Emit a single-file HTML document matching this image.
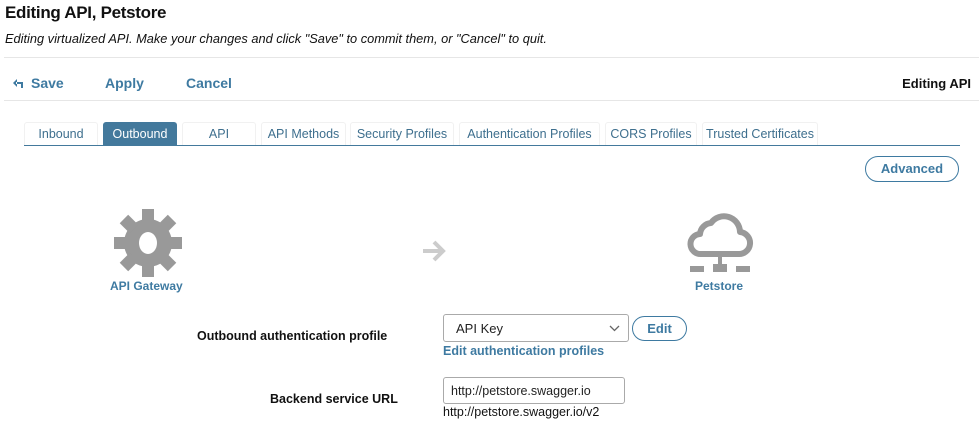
<!DOCTYPE html>
<html><head><meta charset="utf-8"><style>
*{margin:0;padding:0;box-sizing:border-box}
body{width:979px;height:439px;background:#fff;font-family:"Liberation Sans",sans-serif;color:#222;position:relative;overflow:hidden}
.a{position:absolute;white-space:nowrap}
.blue{color:#3e7aa1;font-weight:bold}
.tab{position:absolute;top:122px;height:23px;font-size:12.5px;color:#3e6f8e;text-align:center;line-height:22px;border:1px solid #f1f1f1;border-bottom:none;border-radius:3px 3px 0 0}
.tab.on{background:#43799c;color:#fff;border-color:#43799c}
</style></head><body>
<div class="a" style="left:5px;top:3px;font-size:17px;font-weight:bold;color:#111;letter-spacing:-0.3px">Editing API, Petstore</div>
<div class="a" style="left:5px;top:31px;font-size:12.8px;font-style:italic;color:#111">Editing virtualized API. Make your changes and click "Save" to commit them, or "Cancel" to quit.</div>
<div class="a" style="left:4px;top:57px;width:975px;height:1px;background:#e6e6e6"></div>
<svg class="a" style="left:12px;top:78px" width="14" height="11" viewBox="0 0 14 11"><path d="M5 1 L1 5 L5 9 Z M4 4 H11 V10 H9 V6 H4 Z" fill="#3e7aa1"/></svg>
<div class="a blue" style="left:31px;top:75px;font-size:14px">Save</div>
<div class="a blue" style="left:105px;top:75px;font-size:14px">Apply</div>
<div class="a blue" style="left:186px;top:75px;font-size:14px">Cancel</div>
<div class="a" style="right:8px;top:76px;font-size:13px;font-weight:bold;color:#111">Editing API</div>
<div class="a" style="left:4px;top:100px;width:975px;height:1px;background:#e6e6e6"></div>
<div class="tab" style="left:24px;width:74px">Inbound</div>
<div class="tab on" style="left:103px;width:74px">Outbound</div>
<div class="tab" style="left:182px;width:74px">API</div>
<div class="tab" style="left:261px;width:85px">API Methods</div>
<div class="tab" style="left:350px;width:104px">Security Profiles</div>
<div class="tab" style="left:459px;width:141px">Authentication Profiles</div>
<div class="tab" style="left:605px;width:92px">CORS Profiles</div>
<div class="tab" style="left:702px;width:116px">Trusted Certificates</div>
<div class="a" style="left:24px;top:145px;width:936px;height:1px;background:#43799c"></div>
<div class="a blue" style="left:865px;top:156px;width:94px;height:26px;border:1px solid #3e7aa1;border-radius:13px;font-size:13px;text-align:center;line-height:24px">Advanced</div>
<svg class="a" style="left:114px;top:209px" width="68" height="68" viewBox="-34 -34 68 68">
<g fill="#999"><circle r="24"/>
<g id="t"><rect x="-6" y="-34" width="12" height="14"/></g>
<use href="#t" transform="rotate(45)"/><use href="#t" transform="rotate(90)"/><use href="#t" transform="rotate(135)"/><use href="#t" transform="rotate(180)"/><use href="#t" transform="rotate(225)"/><use href="#t" transform="rotate(270)"/><use href="#t" transform="rotate(315)"/></g>
<ellipse rx="9" ry="11" fill="#fff"/></svg>
<div class="a blue" style="left:110px;top:279px;font-size:12px">API Gateway</div>
<svg class="a" style="left:421px;top:240px" width="26" height="22" viewBox="0 0 26 22"><path d="M2 11 H22 M13 2 L22 11 L13 20" stroke="#ccc" stroke-width="4" fill="none"/></svg>
<svg class="a" style="left:686px;top:211px" width="68" height="66" viewBox="0 0 68 66">
<path d="M15 43 H52 A11 11 0 0 0 54 21 A16 16 0 0 0 25 12 A12 12 0 0 0 14 23 A10 10 0 0 0 15 43 Z" stroke="#999" stroke-width="6" fill="none" stroke-linejoin="round"/>
<g fill="#999"><rect x="32" y="45" width="4" height="10"/><rect x="4" y="55" width="14" height="6"/><rect x="27" y="53" width="14" height="8"/><rect x="50" y="55" width="14" height="6"/></g></svg>
<div class="a blue" style="left:695px;top:279px;font-size:12px">Petstore</div>
<div class="a" style="left:197px;top:329px;font-size:12.5px;font-weight:bold;color:#111">Outbound authentication profile</div>
<div class="a" style="left:443px;top:314px;width:186px;height:28px;border:1px solid #aaa;border-radius:3px;font-size:13px;padding:6px 0 0 12px">API Key
<svg style="position:absolute;right:8px;top:10px" width="11" height="7" viewBox="0 0 11 7"><path d="M1 1 L5.5 5.5 L10 1" stroke="#666" stroke-width="1.3" fill="none"/></svg></div>
<div class="a blue" style="left:632px;top:316px;width:55px;height:25px;border:1px solid #3e7aa1;border-radius:13px;font-size:13px;text-align:center;line-height:23px">Edit</div>
<div class="a blue" style="left:443px;top:344px;font-size:12.5px">Edit authentication profiles</div>
<div class="a" style="left:270px;top:392px;font-size:12.5px;font-weight:bold;color:#111">Backend service URL</div>
<div class="a" style="left:443px;top:377px;width:182px;height:27px;border:1px solid #aaa;border-radius:3px;font-size:12.5px;padding:6px 0 0 7px">http://petstore.swagger.io</div>
<div class="a" style="left:443px;top:405px;font-size:12.5px;color:#111">http://petstore.swagger.io/v2</div>
</body></html>
